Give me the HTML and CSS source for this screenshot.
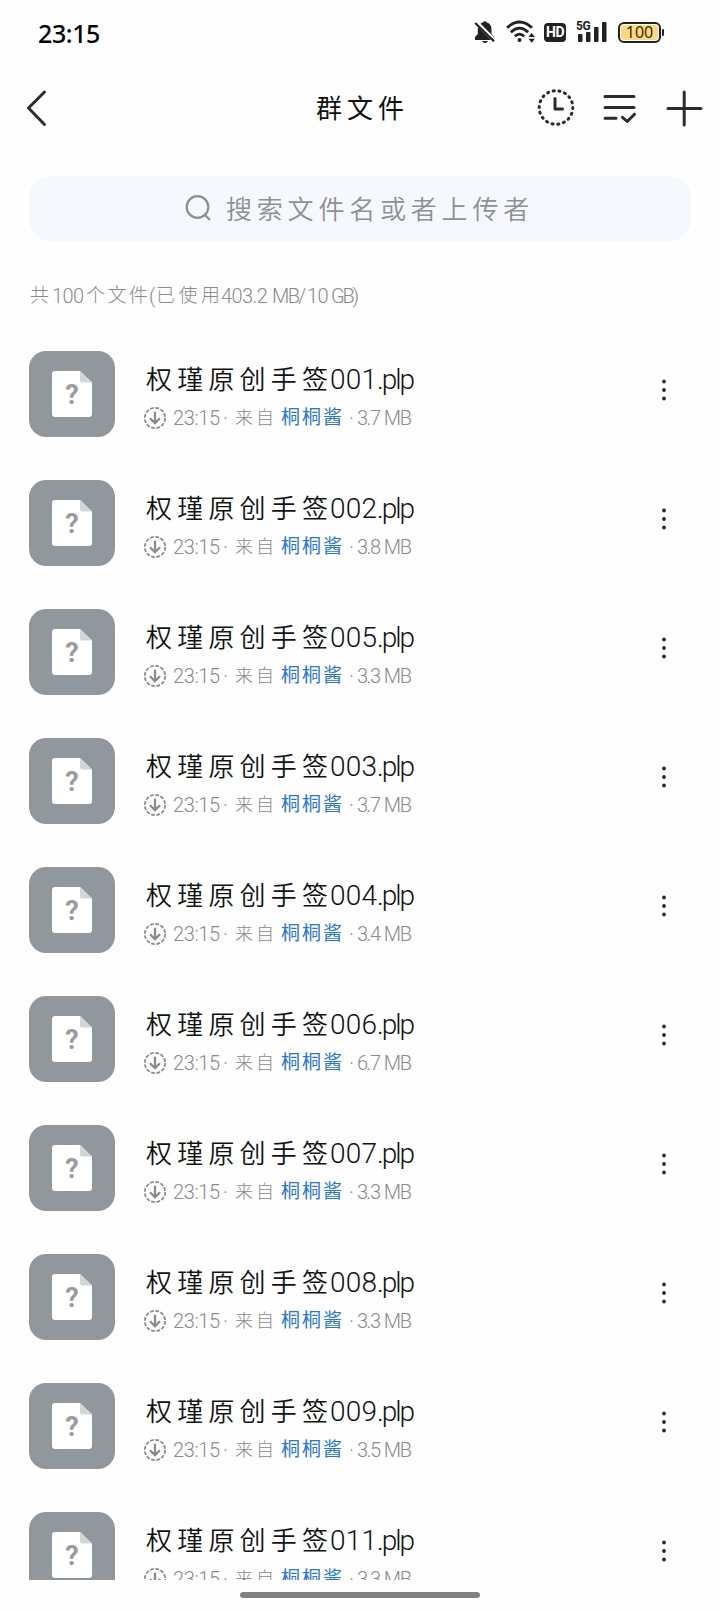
FILE: index.html
```
<!DOCTYPE html>
<html lang="zh-CN">
<head>
<meta charset="utf-8">
<title>群文件</title>
<link rel="stylesheet" href="styles.css">
</head>
<body>
<div class="phone">
  <div class="status">
    <span class="clock">23:15</span>
    <div class="indicators">
      <svg class="ic-bell" width="22" height="24" viewBox="0 0 22 24"><path d="M11 1.2a1.8 1.8 0 0 1 1.7 1.2c3 .7 4.8 3.300 4.800 6.300v5.200l2.800 3.200V20H1v-2.900l2.800-3.200V8.700c0-3 2.200-5.600 5.300-6.300A1.900 1.900 0 0 1 11 1.200z" fill="#222"/><path d="M8 21h6q-1 2-3 2t-3-2z" fill="#222"/><path d="M1.500 1.500 22 22" stroke="#fff" stroke-width="4"/><path d="M1.200 3 20 21.200" stroke="#222" stroke-width="2.200"/></svg>
      <svg class="ic-wifi" width="30" height="24" viewBox="0 0 30 24" fill="none" stroke="#222" stroke-width="2.700"><path d="M1 7.800q12.500-11.600 25 0M4.800 12.200q8.700-8 17.400 0M8.800 16.300q4.700-4.200 9.400 0"/><circle cx="13.500" cy="20" r="2" fill="#222" stroke="none"/><path d="m22.500 17 3.200-4 3.200 4zm0 1.800h6.400l-3.200 4z" fill="#222" stroke="none"/></svg>
      <span class="hd">HD</span>
      <div class="signal"><span class="fiveg">5G</span><svg width="32" height="24" viewBox="0 0 32 24" fill="#222"><rect x="2" y="14" width="4.500" height="8" rx="1"/><rect x="10" y="12" width="4.500" height="10" rx="1"/><rect x="18" y="7" width="4.500" height="15" rx="1"/><rect x="26" y="2" width="4.500" height="20" rx="1"/></svg></div>
      <div class="battery"><span class="level">100</span></div><i class="nub"></i>
    </div>
  </div>

  <header class="bar">
    <svg class="back" width="24" height="40" viewBox="0 0 24 40"><path d="M19.500 4 3.500 20 19.500 36.500" class="line"/></svg>
    <h1 class="title">群文件</h1>
    <div class="actions">
      <svg width="40" height="40" viewBox="0 0 40 40"><circle cx="20" cy="19.500" r="16.800" class="dots" pathLength="180"/><path d="M19 10.500v10.500h7.500" class="line"/></svg>
      <svg width="36" height="40" viewBox="0 0 36 40"><path d="M3 8.500h29M3 19.500h29M3 30.300h11M20.500 29.300l4.700 4.200 7.300-7.300" class="line"/></svg>
      <svg width="40" height="40" viewBox="0 0 40 40"><path d="M20.200 4v33M4 20.500h33" class="line"/></svg>
    </div>
  </header>

  <div class="search">
    <svg width="28" height="28" viewBox="0 0 28 28"><path d="M19.500 20.500 25 26" /><circle cx="12.500" cy="13" r="10.800"/></svg>
    <span class="hint">搜索文件名或者上传者</span>
  </div>

  <p class="usage"><span class="u1">共</span><span class="u2">100</span><span class="u3">个文件</span><span class="u4">(</span><span class="u5">已使用</span><span class="u6">403.2</span><span class="u7">MB/</span><span class="u8">10</span><span class="u9">GB)</span></p>

  <svg class="defs" width="0" height="0">
    <symbol id="doc" viewBox="0 0 40 46"><path d="M3 0h25l12 11.500V43a3 3 0 0 1-3 3H3a3 3 0 0 1-3-3V3a3 3 0 0 1 3-3z" fill="#fff"/><path d="M28 0l12 11.500H30a2 2 0 0 1-2-2z" fill="#d3d6d9"/></symbol>
    <symbol id="down" viewBox="0 0 24 24"><circle cx="12" cy="12" r="10.200" fill="none" stroke="#8b8b8b" stroke-width="1.800" stroke-dasharray="3.800 1.541"/><path d="M12 5.800V17M7 12.200l5 5 5-5" fill="none" stroke="#8b8b8b" stroke-width="2.300"/></symbol>
    <symbol id="more" viewBox="0 0 6 24"><circle cx="3" cy="3.500" r="1.900"/><circle cx="3" cy="12" r="1.900"/><circle cx="3" cy="20.500" r="1.900"/></symbol>
  </svg>

  <main class="list">
    <div class="row"><div class="thumb"><svg class="doc"><use href="#doc"/></svg><b class="q">?</b></div><div class="info"><div class="name"><span class="han">权瑾原创手签</span><span class="num">001</span><span class="ext">.plp</span></div><div class="meta"><svg class="down"><use href="#down"/></svg><span class="time">23:15</span><span class="dot">·</span><span class="from">来自</span><span class="user">桐桐酱</span><span class="dot2">·</span><span class="size">3.7 MB</span></div></div><svg class="more"><use href="#more"/></svg></div>
    <div class="row"><div class="thumb"><svg class="doc"><use href="#doc"/></svg><b class="q">?</b></div><div class="info"><div class="name"><span class="han">权瑾原创手签</span><span class="num">002</span><span class="ext">.plp</span></div><div class="meta"><svg class="down"><use href="#down"/></svg><span class="time">23:15</span><span class="dot">·</span><span class="from">来自</span><span class="user">桐桐酱</span><span class="dot2">·</span><span class="size">3.8 MB</span></div></div><svg class="more"><use href="#more"/></svg></div>
    <div class="row"><div class="thumb"><svg class="doc"><use href="#doc"/></svg><b class="q">?</b></div><div class="info"><div class="name"><span class="han">权瑾原创手签</span><span class="num">005</span><span class="ext">.plp</span></div><div class="meta"><svg class="down"><use href="#down"/></svg><span class="time">23:15</span><span class="dot">·</span><span class="from">来自</span><span class="user">桐桐酱</span><span class="dot2">·</span><span class="size">3.3 MB</span></div></div><svg class="more"><use href="#more"/></svg></div>
    <div class="row"><div class="thumb"><svg class="doc"><use href="#doc"/></svg><b class="q">?</b></div><div class="info"><div class="name"><span class="han">权瑾原创手签</span><span class="num">003</span><span class="ext">.plp</span></div><div class="meta"><svg class="down"><use href="#down"/></svg><span class="time">23:15</span><span class="dot">·</span><span class="from">来自</span><span class="user">桐桐酱</span><span class="dot2">·</span><span class="size">3.7 MB</span></div></div><svg class="more"><use href="#more"/></svg></div>
    <div class="row"><div class="thumb"><svg class="doc"><use href="#doc"/></svg><b class="q">?</b></div><div class="info"><div class="name"><span class="han">权瑾原创手签</span><span class="num">004</span><span class="ext">.plp</span></div><div class="meta"><svg class="down"><use href="#down"/></svg><span class="time">23:15</span><span class="dot">·</span><span class="from">来自</span><span class="user">桐桐酱</span><span class="dot2">·</span><span class="size">3.4 MB</span></div></div><svg class="more"><use href="#more"/></svg></div>
    <div class="row"><div class="thumb"><svg class="doc"><use href="#doc"/></svg><b class="q">?</b></div><div class="info"><div class="name"><span class="han">权瑾原创手签</span><span class="num">006</span><span class="ext">.plp</span></div><div class="meta"><svg class="down"><use href="#down"/></svg><span class="time">23:15</span><span class="dot">·</span><span class="from">来自</span><span class="user">桐桐酱</span><span class="dot2">·</span><span class="size">6.7 MB</span></div></div><svg class="more"><use href="#more"/></svg></div>
    <div class="row"><div class="thumb"><svg class="doc"><use href="#doc"/></svg><b class="q">?</b></div><div class="info"><div class="name"><span class="han">权瑾原创手签</span><span class="num">007</span><span class="ext">.plp</span></div><div class="meta"><svg class="down"><use href="#down"/></svg><span class="time">23:15</span><span class="dot">·</span><span class="from">来自</span><span class="user">桐桐酱</span><span class="dot2">·</span><span class="size">3.3 MB</span></div></div><svg class="more"><use href="#more"/></svg></div>
    <div class="row"><div class="thumb"><svg class="doc"><use href="#doc"/></svg><b class="q">?</b></div><div class="info"><div class="name"><span class="han">权瑾原创手签</span><span class="num">008</span><span class="ext">.plp</span></div><div class="meta"><svg class="down"><use href="#down"/></svg><span class="time">23:15</span><span class="dot">·</span><span class="from">来自</span><span class="user">桐桐酱</span><span class="dot2">·</span><span class="size">3.3 MB</span></div></div><svg class="more"><use href="#more"/></svg></div>
    <div class="row"><div class="thumb"><svg class="doc"><use href="#doc"/></svg><b class="q">?</b></div><div class="info"><div class="name"><span class="han">权瑾原创手签</span><span class="num">009</span><span class="ext">.plp</span></div><div class="meta"><svg class="down"><use href="#down"/></svg><span class="time">23:15</span><span class="dot">·</span><span class="from">来自</span><span class="user">桐桐酱</span><span class="dot2">·</span><span class="size">3.5 MB</span></div></div><svg class="more"><use href="#more"/></svg></div>
    <div class="row"><div class="thumb"><svg class="doc"><use href="#doc"/></svg><b class="q">?</b></div><div class="info"><div class="name"><span class="han">权瑾原创手签</span><span class="num">011</span><span class="ext">.plp</span></div><div class="meta"><svg class="down"><use href="#down"/></svg><span class="time">23:15</span><span class="dot">·</span><span class="from">来自</span><span class="user">桐桐酱</span><span class="dot2">·</span><span class="size">3.3 MB</span></div></div><svg class="more"><use href="#more"/></svg></div>
  </main>
  <div class="home"></div>
</div>
</body>
</html>
```

FILE: styles.css
```
* { box-sizing: border-box; margin: 0; padding: 0; }
body { background: #fefefe; font-family: Roboto, "Noto Sans CJK SC", sans-serif; color: #111; }
svg { display: block; flex: none; }
span { white-space: nowrap; }
.phone { width: 720px; height: 1612px; overflow: hidden; display: flex; flex-direction: column; }

.status { height: 64px; flex: none; display: flex; justify-content: space-between; padding: 0 56px 0 38px; }
.clock { font: 500 25px/30px "Noto Sans", sans-serif; margin-top: 18px; color: #000; letter-spacing: -.4px; }
.indicators { display: flex; align-items: flex-start; padding-top: 20px; }
.ic-wifi { margin-left: 10px; }
.hd { width: 22px; height: 19px; margin: 3px 0 0 8px; background: #222; color: #fff; border-radius: 4px; font: 700 14px/19px Roboto, sans-serif; text-align: center; letter-spacing: -.5px; }
.signal { position: relative; margin-left: 10px; width: 32px; }
.fiveg { position: absolute; left: 0; top: 0; font: 700 12px/12px Roboto, sans-serif; letter-spacing: -.3px; color: #222; }
.battery { width: 43px; height: 21px; margin: 2px 0 0 10px; border: 2px solid #222; border-radius: 6px; padding: 1px; }
.level { display: block; height: 15px; border-radius: 3px; background: #fbd981; font: 400 16px/15px "Noto Sans", sans-serif; text-align: center; color: #3a2b0c; }
.nub { width: 2px; height: 7px; margin: 9px 0 0 1px; background: #222; border-radius: 1px; }

.bar { height: 88px; flex: none; display: flex; align-items: center; padding: 0 16px 0 25px; }
.line { fill: none; stroke: #2c2c2e; stroke-width: 3; stroke-linecap: round; stroke-linejoin: round; }
.dots { fill: none; stroke: #2c2c2e; stroke-width: 3; stroke-dasharray: 2 8; stroke-linecap: round; }
.title { margin: 2px 0 0 267px; width: 96px; font-size: 26px; font-weight: 400; letter-spacing: 5px; line-height: 36px; white-space: nowrap; }
.actions { margin-left: auto; display: flex; align-items: center; gap: 26px; }

.search { height: 65px; flex: none; margin: 24px 29px 0; border-radius: 22px; background: #f5f8ff; display: flex; align-items: center; padding-left: 156px; }
.search svg { fill: none; stroke: #8d9094; stroke-width: 2.2; margin-top: -2px; }
.hint { margin: 2px 0 0 13px; font-size: 26px; font-weight: 350; letter-spacing: 4.8px; line-height: 36px; color: #8d9094; }

.usage { height: 24px; flex: none; margin: 42px 0 0 30px; display: flex; font-size: 20px; line-height: 26px; font-weight: 300; color: #8b8b8b; }
.usage span { flex: none; }
.u1 { width: 22px; font-size: 19px; }
.u2 { width: 34px; letter-spacing: -.6px; }
.u3 { width: 63px; font-size: 19px; letter-spacing: 2.4px; }
.u4 { width: 7px; }
.u5 { width: 65px; font-size: 19px; letter-spacing: 3.5px; }
.u6 { width: 51px; letter-spacing: -.6px; }
.u7 { width: 35px; letter-spacing: -1.6px; }
.u8 { width: 24px; letter-spacing: -.6px; }
.u9 { letter-spacing: -2.2px; }

.defs { position: absolute; }
.list { height: 1273px; flex: none; padding-top: 44px; overflow: hidden; }
.row { height: 86px; margin-bottom: 43px; padding: 0 52px 0 29px; display: flex; }
.thumb { width: 86px; height: 86px; flex: none; border-radius: 17px; background: #90989d; display: grid; place-items: center; }
.doc, .q { grid-area: 1 / 1; }
.doc { width: 40px; height: 46px; }
.q { font: 700 27px/32px Roboto, sans-serif; color: #999b9e; padding-top: 1px; }
.info { margin-left: 29px; flex: 1; }
.name { height: 36px; margin-top: 11px; display: flex; align-items: baseline; line-height: 36px; font-weight: 300; }
.han { width: 184px; margin-left: 2px; font-size: 26px; letter-spacing: 5.2px; font-weight: 350; }
.num { width: 47px; font-size: 28px; letter-spacing: .2px; }
.ext { font-size: 28px; letter-spacing: -2px; }
.meta { height: 26px; margin-top: 7px; display: flex; align-items: center; line-height: 26px; font-size: 20px; font-weight: 300; color: #8b8b8b; }
.meta span { flex: none; }
.down { width: 24px; height: 24px; margin-left: -1px; }
.time { width: 52px; margin-left: 6px; letter-spacing: -.4px; }
.dot { width: 10px; text-indent: -2px; }
.from { width: 46px; font-size: 18px; letter-spacing: 3px; }
.user { width: 68px; font-size: 19px; letter-spacing: 2px; color: #2d77c9; font-weight: 400; }
.dot2 { width: 8px; }
.size { letter-spacing: -1.5px; word-spacing: 1px; }
.more { width: 6px; height: 24px; margin: 27px 1px 0 0; fill: #2c2c2e; }
.home { width: 240px; height: 6px; flex: none; margin: 12px auto 0; border-radius: 3px; background: #808080; }
```
